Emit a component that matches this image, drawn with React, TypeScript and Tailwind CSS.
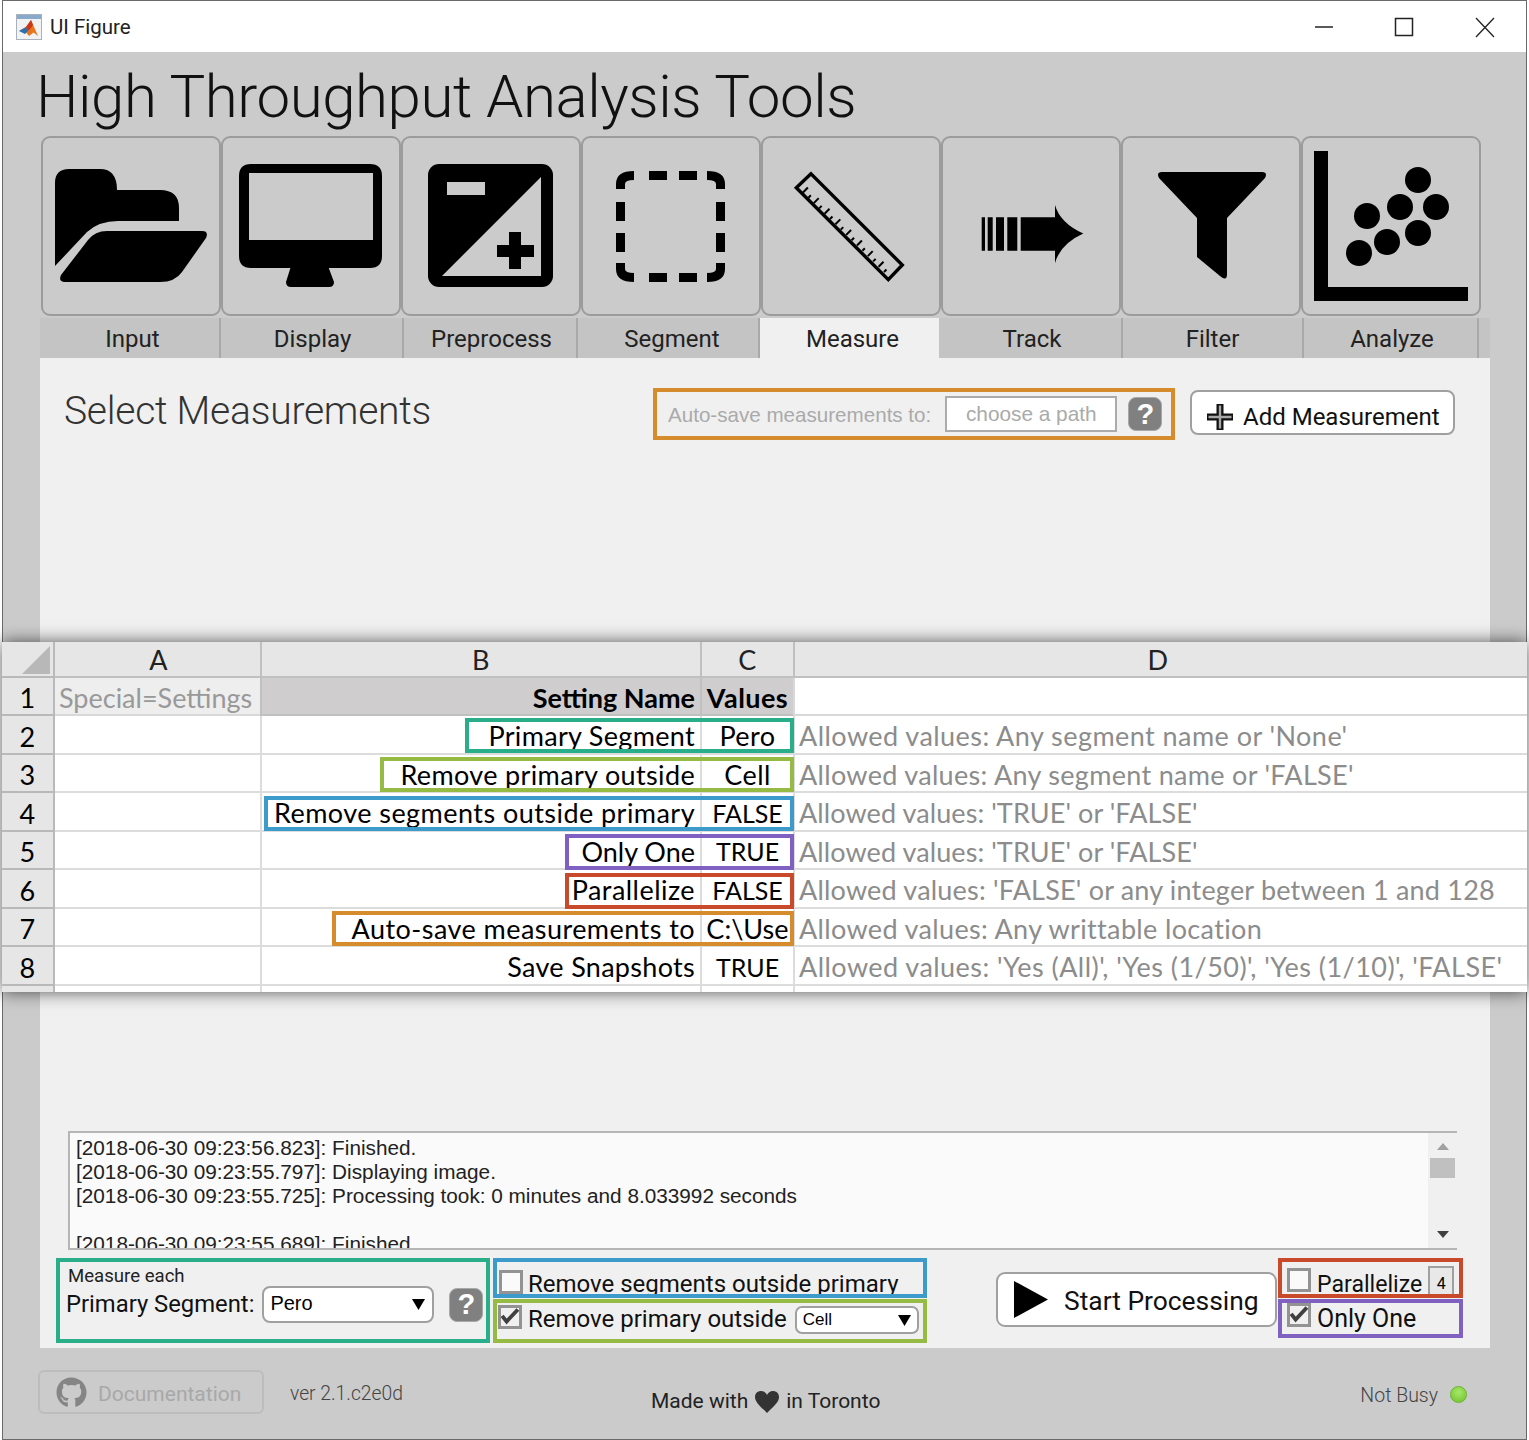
import React from 'react';
import { FaGithub } from 'react-icons/fa';

const tabs = [
  { label: 'Input', width: 'w-[181px]', pad: 'pl-[6px]' },
  { label: 'Display', width: 'w-[183px]', pad: 'pl-[2px]' },
  { label: 'Preprocess', width: 'w-[174px]', pad: 'pl-[3px]' },
  { label: 'Segment', width: 'w-[182px]', pad: 'pl-[8px]' },
  { label: 'Measure', width: 'w-[179px]', pad: 'pl-[6px]', active: true },
  { label: 'Track', width: 'w-[184px]', pad: 'pl-[4px]' },
  { label: 'Filter', width: 'w-[181px]', pad: 'pl-0' },
  { label: 'Analyze', width: 'w-[175px]', pad: 'pl-[3px]' },
];

// tracking per row: Calibri's capitals and quotes are narrower than Lato's
const sheetRows = [
  {
    n: 2,
    name: 'Primary Segment',
    nameClass: 'tracking-[0.32px]',
    value: 'Pero',
    valueClass: '',
    note: "Allowed values: Any segment name or 'None'",
    noteClass: '',
  },
  {
    n: 3,
    name: 'Remove primary outside',
    nameClass: 'tracking-[0.35px]',
    value: 'Cell',
    valueClass: '',
    note: "Allowed values: Any segment name or 'FALSE'",
    noteClass: 'tracking-[0.31px]',
  },
  {
    n: 4,
    name: 'Remove segments outside primary',
    nameClass: '',
    value: 'FALSE',
    valueClass: 'text-[25px] tracking-[0px]',
    note: "Allowed values: 'TRUE' or 'FALSE'",
    noteClass: 'tracking-[0.09px]',
  },
  {
    n: 5,
    name: 'Only One',
    nameClass: 'tracking-[0px]',
    value: 'TRUE',
    valueClass: 'text-[25px] tracking-[0px]',
    note: "Allowed values: 'TRUE' or 'FALSE'",
    noteClass: 'tracking-[0.09px]',
  },
  {
    n: 6,
    name: 'Parallelize',
    nameClass: '',
    value: 'FALSE',
    valueClass: 'text-[25px] tracking-[0px]',
    note: "Allowed values: 'FALSE' or any integer between 1 and 128",
    noteClass: 'tracking-[0.2px]',
  },
  {
    n: 7,
    name: 'Auto-save measurements to',
    nameClass: '',
    value: 'C:\\Use',
    valueClass: 'tracking-[0.1px]',
    note: 'Allowed values: Any writtable location',
    noteClass: 'tracking-[0.35px]',
  },
  {
    n: 8,
    name: 'Save Snapshots',
    nameClass: 'tracking-[0.3px]',
    value: 'TRUE',
    valueClass: 'text-[25px] tracking-[0px]',
    note: "Allowed values: 'Yes (All)', 'Yes (1/50)', 'Yes (1/10)', 'FALSE'",
    noteClass: '',
  },
];

// icons use page coordinates through their viewBox
const ToolIcon = ({ x, children }: { x: number; children: React.ReactNode }) => (
  <button className="w-[180px] h-[180px] shrink-0 border-2 border-[#9c9c9c] rounded-[9px] bg-[#cbcbcb]">
    <svg className="block w-full h-full" viewBox={`${x + 2} 138 176 176`}>
      {children}
    </svg>
  </button>
);

const RulerTicks = () => (
  <>
    {Array.from({ length: 16 }).map((_, i) => {
      const px = 803 + i * 5.4;
      const py = 192.5 + i * 5.3;
      const len = i % 2 === 0 ? 7 : 3.5;
      return <line key={i} x1={px} y1={py} x2={px + len * 0.7} y2={py - len * 0.71} stroke="#000" strokeWidth="2" />;
    })}
  </>
);

const HelpButton = () => (
  <div className="w-[34px] h-[34px] shrink-0 rounded-[8px] bg-[#808080] border border-[#a8a8a8] flex items-center justify-center text-white text-[29px] font-bold leading-none font-['Liberation_Sans',sans-serif]">
    ?
  </div>
);

const Check = () => (
  <svg viewBox="2 2 16 16" className="w-full h-full block overflow-visible">
    <path d="M3 9 L7 14 L17 3.3" fill="none" stroke="#404040" strokeWidth="3.4" />
  </svg>
);

const Checkbox = ({ checked }: { checked?: boolean }) => (
  <div className={`w-[24px] h-[24px] shrink-0 border-[3px] border-[#939393] ${checked ? 'bg-[#f0f0f0]' : 'bg-[#fafafa]'}`}>{checked && <Check />}</div>
);

const Caret = () => (
  <svg viewBox="0 0 13 11" className="w-[13px] h-[11px] shrink-0">
    <path d="M0 0 H13 L6.5 11 Z" fill="#000" />
  </svg>
);

const App: React.FC = () => {
  return (
    <div className="relative w-[1529px] h-[1440px] bg-white overflow-hidden font-['Roboto',sans-serif] text-black">
      <div className="ml-[2px] w-[1525px] h-[1440px] border border-[#6a6a6a] flex flex-col">
        {/* title bar */}
        <div className="h-[51px] shrink-0 bg-white flex items-center pl-[13px]">
          <svg viewBox="0 0 26 26" className="w-[26px] h-[26px]">
            <rect x="0.5" y="0.5" width="25" height="25" fill="#f0f2f4" stroke="#a9b2bb" />
            <rect x="1" y="1" width="24" height="4" fill="#88a9c9" />
            <path d="M3 17 L10 13 L15 6 L22 22 L17.5 18.5 L13 22 L9 17 Z" fill="#e8761f" />
            <path d="M3 17 L10 13 L12 17 L9 20 Z" fill="#2f6fae" />
            <path d="M15 6 L10 13 L12 17 L15 14 L17 11 Z" fill="#c8391c" />
          </svg>
          <span className="ml-[8px] pt-[2px] text-[20.5px] text-[#222]">UI Figure</span>
          <div className="ml-auto flex items-center">
            <svg viewBox="0 0 180 24" className="w-[180px] h-[24px] mr-[31px]">
              <line x1="0" y1="12" x2="18" y2="12" stroke="#222" strokeWidth="1.5" />
              <rect x="80.5" y="3.5" width="17" height="17" fill="none" stroke="#222" strokeWidth="1.5" />
              <path d="M161 3 L179 22 M179 3 L161 22" fill="none" stroke="#222" strokeWidth="1.3" />
            </svg>
          </div>
        </div>

        <div className="flex-1 bg-[#cbcbcb] flex flex-col">
          <div className="h-[84px] shrink-0 pl-[33px] text-[60px] leading-[90px] font-light tracking-[-0.45px] text-[#111]">
            High Throughput Analysis Tools
          </div>

          {/* tool buttons */}
          <div className="flex ml-[38px]">
            <ToolIcon x={41}>
              <path d="M55 266 V183 Q55 169 69 169 H100 Q117 169 117 190 H160 Q179 190 179 208 V221 H118 Q99 221 87 232 Z" />
              <path d="M107 231 H202 Q209 231 206 238 L182 272 Q175 282 160 282 H65 Q58 282 61 275 L88 240 Q95 231 107 231 Z" />
            </ToolIcon>
            <ToolIcon x={221}>
              <path fillRule="evenodd" d="M251 164 H370 Q382 164 382 176 V256 Q382 268 370 268 H251 Q239 268 239 256 V176 Q239 164 251 164 Z M249 173 V240 H373 V173 Z" />
              <path d="M291 266 H328 L334 282 Q334 287 329 287 H291 Q286 287 286 282 Z" />
            </ToolIcon>
            <ToolIcon x={401}>
              <rect x="428" y="164" width="125" height="123" rx="11" />
              <path d="M541 177 V276 H442 Z" fill="#cbcbcb" />
              <rect x="447" y="182" width="38" height="13" fill="#cbcbcb" />
              <path d="M509 232 H521 V245 H534 V257 H521 V269 H509 V257 H497 V245 H509 Z" />
            </ToolIcon>
            <ToolIcon x={581}>
              <g fill="none" stroke="#000" strokeWidth="9">
                <path d="M620.5 189 V184 Q620.5 175.5 634 175.5" />
                <path d="M707 175.5 Q720.5 175.5 720.5 184 V189" />
                <path d="M620.5 263 V269 Q620.5 277.5 634 277.5" />
                <path d="M707 277.5 Q720.5 277.5 720.5 269 V263" />
                <path d="M649 175.5 H667 M679 175.5 H697 M649 277.5 H667 M679 277.5 H697" />
                <path d="M620.5 202 V221 M620.5 233 V252 M720.5 202 V221 M720.5 233 V252" />
              </g>
            </ToolIcon>
            <ToolIcon x={761}>
              <path d="M811 173.8 L796.3 187.7 L888.3 279.6 L902.3 265 Z" fill="none" stroke="#000" strokeWidth="3.4" />
              <RulerTicks />
            </ToolIcon>
            <ToolIcon x={941}>
              <path d="M981.7 217.3 H985 V250.7 H981.7 Z M987.7 217.3 H992.7 V250.7 H987.7 Z M996 217.3 H1004 V250.7 H996 Z M1007.3 217.3 H1017.3 V250.7 H1007.3 Z" />
              <path d="M1020.7 217.3 H1055 V205 Q1060 223 1083.3 233.5 Q1060 244 1055 263.3 V250.7 H1020.7 Z" />
            </ToolIcon>
            <ToolIcon x={1121}>
              <path d="M1162 172 H1262 Q1268 172 1265 178 L1227 218 V274 Q1227 282 1220 276 L1197 257 V218 L1159 178 Q1156 172 1162 172 Z" />
            </ToolIcon>
            <ToolIcon x={1301}>
              <path d="M1314 151 H1328 V287 H1468 V301 H1314 Z" />
              {[
                [1418, 180],
                [1400, 207],
                [1436, 207],
                [1367, 216],
                [1418, 233],
                [1387, 242],
                [1359, 253],
              ].map(([cx, cy]) => (
                <circle key={`${cx}-${cy}`} cx={cx} cy={cy} r="13" />
              ))}
            </ToolIcon>
          </div>

          {/* tabs */}
          <div className="mt-[2px] ml-[37px] w-[1450px] h-[40px] shrink-0 flex bg-[#c4c4c4] text-[24px] text-[#222]">
            {tabs.map((tab) => (
              <div
                key={tab.label}
                className={`${tab.width} ${tab.pad} h-full flex items-center justify-center pt-[2px] ${tab.active ? 'bg-[#f0f0f0]' : 'border-r-2 border-[#a9a9a9]'}`}
              >
                {tab.label}
              </div>
            ))}
          </div>

          {/* panel */}
          <div className="ml-[37px] w-[1450px] h-[990px] shrink-0 bg-[#f0f0f0] flex flex-col">
            <div className="flex items-start mt-[30px] h-[52px]">
              <div className="ml-[24px] text-[39px] leading-[46px] tracking-[-0.25px] font-light text-[#333]">Select Measurements</div>
              <div className="ml-auto w-[522px] h-[52px] border-4 border-[#d68b2c] flex items-center pl-[11px]">
                <span className="text-[20.6px] pt-[3px] text-[#aaaaaa] font-['Liberation_Sans',sans-serif]">Auto-save measurements to:</span>
                <div className="ml-[14px] w-[172px] h-[36px] border-2 border-[#ababab] bg-white flex items-center justify-center text-[20.8px] text-[#aaaaaa] font-['Liberation_Sans',sans-serif]">
                  choose a path
                </div>
                <div className="ml-[11px]">
                  <HelpButton />
                </div>
              </div>
              <button className="ml-[15px] mr-[35px] mt-[2px] w-[265px] h-[45px] bg-white border-2 border-[#a0a0a0] rounded-[8px] flex items-center pl-[15px] pt-[8px] text-[24px] text-[#111]">
                <svg viewBox="0 0 26 26" className="w-[26px] h-[26px] mr-[10px]">
                  <path d="M13 0 V26 M0 13 H26" stroke="#111" strokeWidth="7" />
                  <path d="M13 1.5 V24.5 M1.5 13 H24.5" stroke="#a8a8a8" strokeWidth="2.4" />
                </svg>
                Add Measurement
              </button>
            </div>

            <div className="flex-1" />

            {/* log */}
            <div className="ml-[28px] w-[1389px] h-[119px] shrink-0 flex border-t-2 border-b-2 border-l-2 border-[#b5b5b5]">
              <div className="flex-1 bg-[#fafafa] overflow-hidden pl-[6px] pt-[3px] text-[20.75px] leading-[24px] text-[#222] font-['Liberation_Sans',sans-serif] whitespace-pre">
                <div>[2018-06-30 09:23:56.823]: Finished.</div>
                <div>[2018-06-30 09:23:55.797]: Displaying image.</div>
                <div>[2018-06-30 09:23:55.725]: Processing took: 0 minutes and 8.033992 seconds</div>
                <div>&nbsp;</div>
                <div>[2018-06-30 09:23:55.689]: Finished.</div>
              </div>
              <div className="w-[29px] shrink-0 bg-[#f0f0f0] flex flex-col items-center pt-[10px] pb-[10px]">
                <svg viewBox="0 0 12 7" className="w-[12px] h-[7px]">
                  <path d="M0 7 H12 L6 0 Z" fill="#a0a0a0" />
                </svg>
                <div className="mt-[8px] w-[25px] h-[20px] bg-[#c0c0c0]" />
                <svg viewBox="0 0 12 7" className="mt-auto w-[12px] h-[7px]">
                  <path d="M0 0 H12 L6 7 Z" fill="#404040" />
                </svg>
              </div>
            </div>

            {/* controls */}
            <div className="mt-[8px] ml-[16px] h-[90px] shrink-0 flex items-start">
              <div className="w-[434px] h-[85px] border-4 border-[#2aae8a] pl-[6px] pt-[3px]">
                <div className="pl-[2px] text-[18.6px] leading-[22px] text-[#222]">Measure each</div>
                <div className="flex items-center -mt-[1px]">
                  <span className="text-[23.8px] text-[#111]">Primary Segment:</span>
                  <div className="ml-[8px] w-[172px] h-[37px] rounded-[8px] border-2 border-[#a0a0a0] bg-white flex items-center pl-[6px] pr-[7px] text-[20px] leading-[24px] font-['Liberation_Sans',sans-serif]">
                    <span className="flex-1 -mt-[3px]">Pero</span>
                    <Caret />
                  </div>
                  <div className="ml-[15px]">
                    <HelpButton />
                  </div>
                </div>
              </div>

              <div className="ml-[3px] flex flex-col">
                <div className="w-[434px] h-[40px] border-4 border-[#3c9bcb] overflow-hidden pl-[2px] pt-[8px] flex items-start">
                  <Checkbox />
                  <span className="ml-[5px] text-[24px] leading-[28px] text-[#111]">Remove segments outside primary</span>
                </div>
                <div className="mt-[1px] w-[434px] h-[44px] border-4 border-[#95bb45] pl-[1px] flex items-start">
                  <div className="mt-[2px]">
                    <Checkbox checked />
                  </div>
                  <span className="ml-[6px] mt-[2px] text-[24px] leading-[28px] text-[#111]">Remove primary outside</span>
                  <div className="ml-[8px] mt-[3px] w-[124px] h-[28px] rounded-[7px] border-2 border-[#a0a0a0] bg-white flex items-center pl-[6px] pr-[6px] text-[17px] font-['Liberation_Sans',sans-serif]">
                    <span className="flex-1">Cell</span>
                    <Caret />
                  </div>
                </div>
              </div>

              <button className="ml-[69px] mt-[14px] w-[281px] h-[55px] bg-white border-2 border-[#a0a0a0] rounded-[9px] flex items-center pl-[16px] text-[26.4px] text-[#111]">
                <svg viewBox="0 0 34 37" className="w-[34px] h-[37px] mr-[16px]">
                  <path d="M0 0 L34 18.5 L0 37 Z" fill="#000" />
                </svg>
                <span className="pt-[4px]">Start Processing</span>
              </button>

              <div className="ml-[1px] flex flex-col">
                <div className="w-[185px] h-[40px] border-4 border-[#c94a2a] pl-[5px] flex items-start">
                  <div className="mt-[6px]">
                    <Checkbox />
                  </div>
                  <span className="ml-[6px] mt-[9px] text-[23.1px] leading-[28px] text-[#111]">Parallelize</span>
                  <div className="ml-[6px] mt-[4px] w-[26px] h-[28px] border-2 border-b-0 border-[#a0a0a0] bg-[#e8e8e8] flex items-end justify-center text-[16px] leading-[20px]">4</div>
                </div>
                <div className="mt-[1px] w-[185px] h-[39px] border-4 border-[#8060c0] pl-[5px] flex items-start">
                  <div className="mt-0">
                    <Checkbox checked />
                  </div>
                  <span className="ml-[6px] mt-[1px] text-[25px] leading-[30px] text-[#111]">Only One</span>
                </div>
              </div>
            </div>
          </div>

          {/* footer */}
          <div className="flex-1 flex items-start">
            <div className="ml-[35px] mt-[22px] w-[226px] h-[44px] border-2 border-[#bdbdbd] rounded-[6px] flex items-center pl-[16px] text-[21px] text-[#a8a8a8]">
              <FaGithub className="w-[31px] h-[31px] text-[#858585] mr-[11px]" />
              <span className="pt-[5px]">Documentation</span>
            </div>
            <div className="ml-[26px] mt-[32px] text-[19.3px] leading-[28px] font-light text-[#444]">ver 2.1.c2e0d</div>
            <div className="ml-[248px] mt-[38px] flex items-center text-[21px] text-[#222]">
              Made with
              <svg viewBox="0 0 24 22" className="w-[24px] h-[22px] mx-[7px]">
                <path d="M12 22 C5 15 0 11 0 6 C0 2 3 0 6 0 C9 0 11 2 12 4 C13 2 15 0 18 0 C21 0 24 2 24 6 C24 11 19 15 12 22 Z" fill="#333" />
              </svg>
              in Toronto
            </div>
            <div className="ml-auto mr-[59px] mt-[34px] flex items-center text-[19.5px] leading-[28px] font-light text-[#444]">
              Not Busy
              <div className="ml-[12px] -mt-[3px] w-[17px] h-[17px] rounded-full bg-[radial-gradient(circle_at_50%_35%,#a8e86a,#6fc02c)] border border-[#6ab52e]" />
            </div>
          </div>
        </div>
      </div>

      {/* spreadsheet overlay */}
      <div className="absolute left-[2px] top-[642px] w-[1525px] h-[350px] bg-white overflow-hidden shadow-[0_0_16px_rgba(0,0,0,0.65)] font-['Lato',sans-serif] text-[27px] tracking-[0.45px]">
        <div className="grid grid-cols-[53px_205px_440px_93px_734px] grid-rows-[36px_38px_39px_38px_39px_38px_39px_38px_39px_6px] h-full">
          <div className="bg-[#e6e6e6] border-r-2 border-b-2 border-[#b9b9b9] flex items-end justify-end pr-[3px] pb-[2px]">
            <svg viewBox="0 0 28 28" className="w-[28px] h-[28px]">
              <path d="M28 0 V28 H0 Z" fill="#b8b8b8" />
            </svg>
          </div>
          <div className="bg-[#e6e6e6] border-b-2 border-[#c0c0c0] flex items-center justify-center pl-[2px] pt-[2px] text-[#222]">A</div>
          <div className="bg-[#e6e6e6] border-l-2 border-b-2 border-[#c0c0c0] flex items-center justify-center pt-[2px] text-[#222]">B</div>
          <div className="bg-[#e6e6e6] border-l-2 border-b-2 border-[#c0c0c0] flex items-center justify-center pt-[2px] text-[#222]">C</div>
          <div className="bg-[#e6e6e6] border-l-2 border-b-2 border-[#c0c0c0] flex items-center justify-center pr-[6px] pt-[2px] text-[#222]">D</div>

          <div className="bg-[#e6e6e6] border-r-2 border-b-2 border-[#b9b9b9] flex items-center justify-center pt-[5px]">1</div>
          <div className="bg-[#eeeeee] border-b-2 border-[#d8d8d8] flex items-center pl-[4px] pt-[4px] tracking-[0px] text-[#999999]">Special=Settings</div>
          <div className="bg-[#cfcdce] border-l-2 border-b-2 border-[#c0c0c0] flex items-center justify-end pr-[5px] pt-[4px] tracking-[0px] font-bold">Setting Name</div>
          <div className="bg-[#cfcdce] border-l-2 border-b-2 border-[#c0c0c0] flex items-center justify-center pt-[4px] font-bold">Values</div>
          <div className="border-l-2 border-b-2 border-[#d8d8d8]" />

          {sheetRows.map((row) => (
            <React.Fragment key={row.n}>
              <div className="bg-[#e6e6e6] border-r-2 border-b-2 border-[#b9b9b9] flex items-center justify-center pt-[5px]">{row.n}</div>
              <div className="border-b-2 border-[#dcdcdc]" />
              <div className={`border-l-2 border-b-2 border-[#dcdcdc] flex items-center justify-end pr-[5px] pt-[4px] whitespace-nowrap ${row.nameClass}`}>{row.name}</div>
              <div className={`border-l-2 border-b-2 border-[#dcdcdc] flex items-center justify-center pt-[4px] whitespace-nowrap overflow-hidden ${row.valueClass}`}>{row.value}</div>
              <div className={`border-l-2 border-b-2 border-[#dcdcdc] flex items-center pl-[4px] pt-[4px] text-[#8c8c8c] whitespace-nowrap ${row.noteClass}`}>{row.note}</div>
            </React.Fragment>
          ))}

          <div className="bg-[#e6e6e6] border-r-2 border-[#b9b9b9]" />
          <div />
          <div className="border-l-2 border-[#dcdcdc]" />
          <div className="border-l-2 border-[#dcdcdc]" />
          <div className="border-l-2 border-[#dcdcdc]" />
        </div>

        {/* colour-coded outlines linking settings to controls */}
        <div className="absolute left-[463px] top-[76px] w-[329px] h-[35px] border-4 border-[#2aae8a]" />
        <div className="absolute left-[378px] top-[115px] w-[414px] h-[35px] border-4 border-[#95bb45]" />
        <div className="absolute left-[262px] top-[154px] w-[530px] h-[35px] border-4 border-[#3c9bcb]" />
        <div className="absolute left-[563px] top-[192px] w-[229px] h-[36px] border-4 border-[#8060c0]" />
        <div className="absolute left-[563px] top-[231px] w-[229px] h-[36px] border-4 border-[#c94a2a]" />
        <div className="absolute left-[330px] top-[269px] w-[462px] h-[35px] border-4 border-[#d68b2c]" />
      </div>
    </div>
  );
};

export default App;
